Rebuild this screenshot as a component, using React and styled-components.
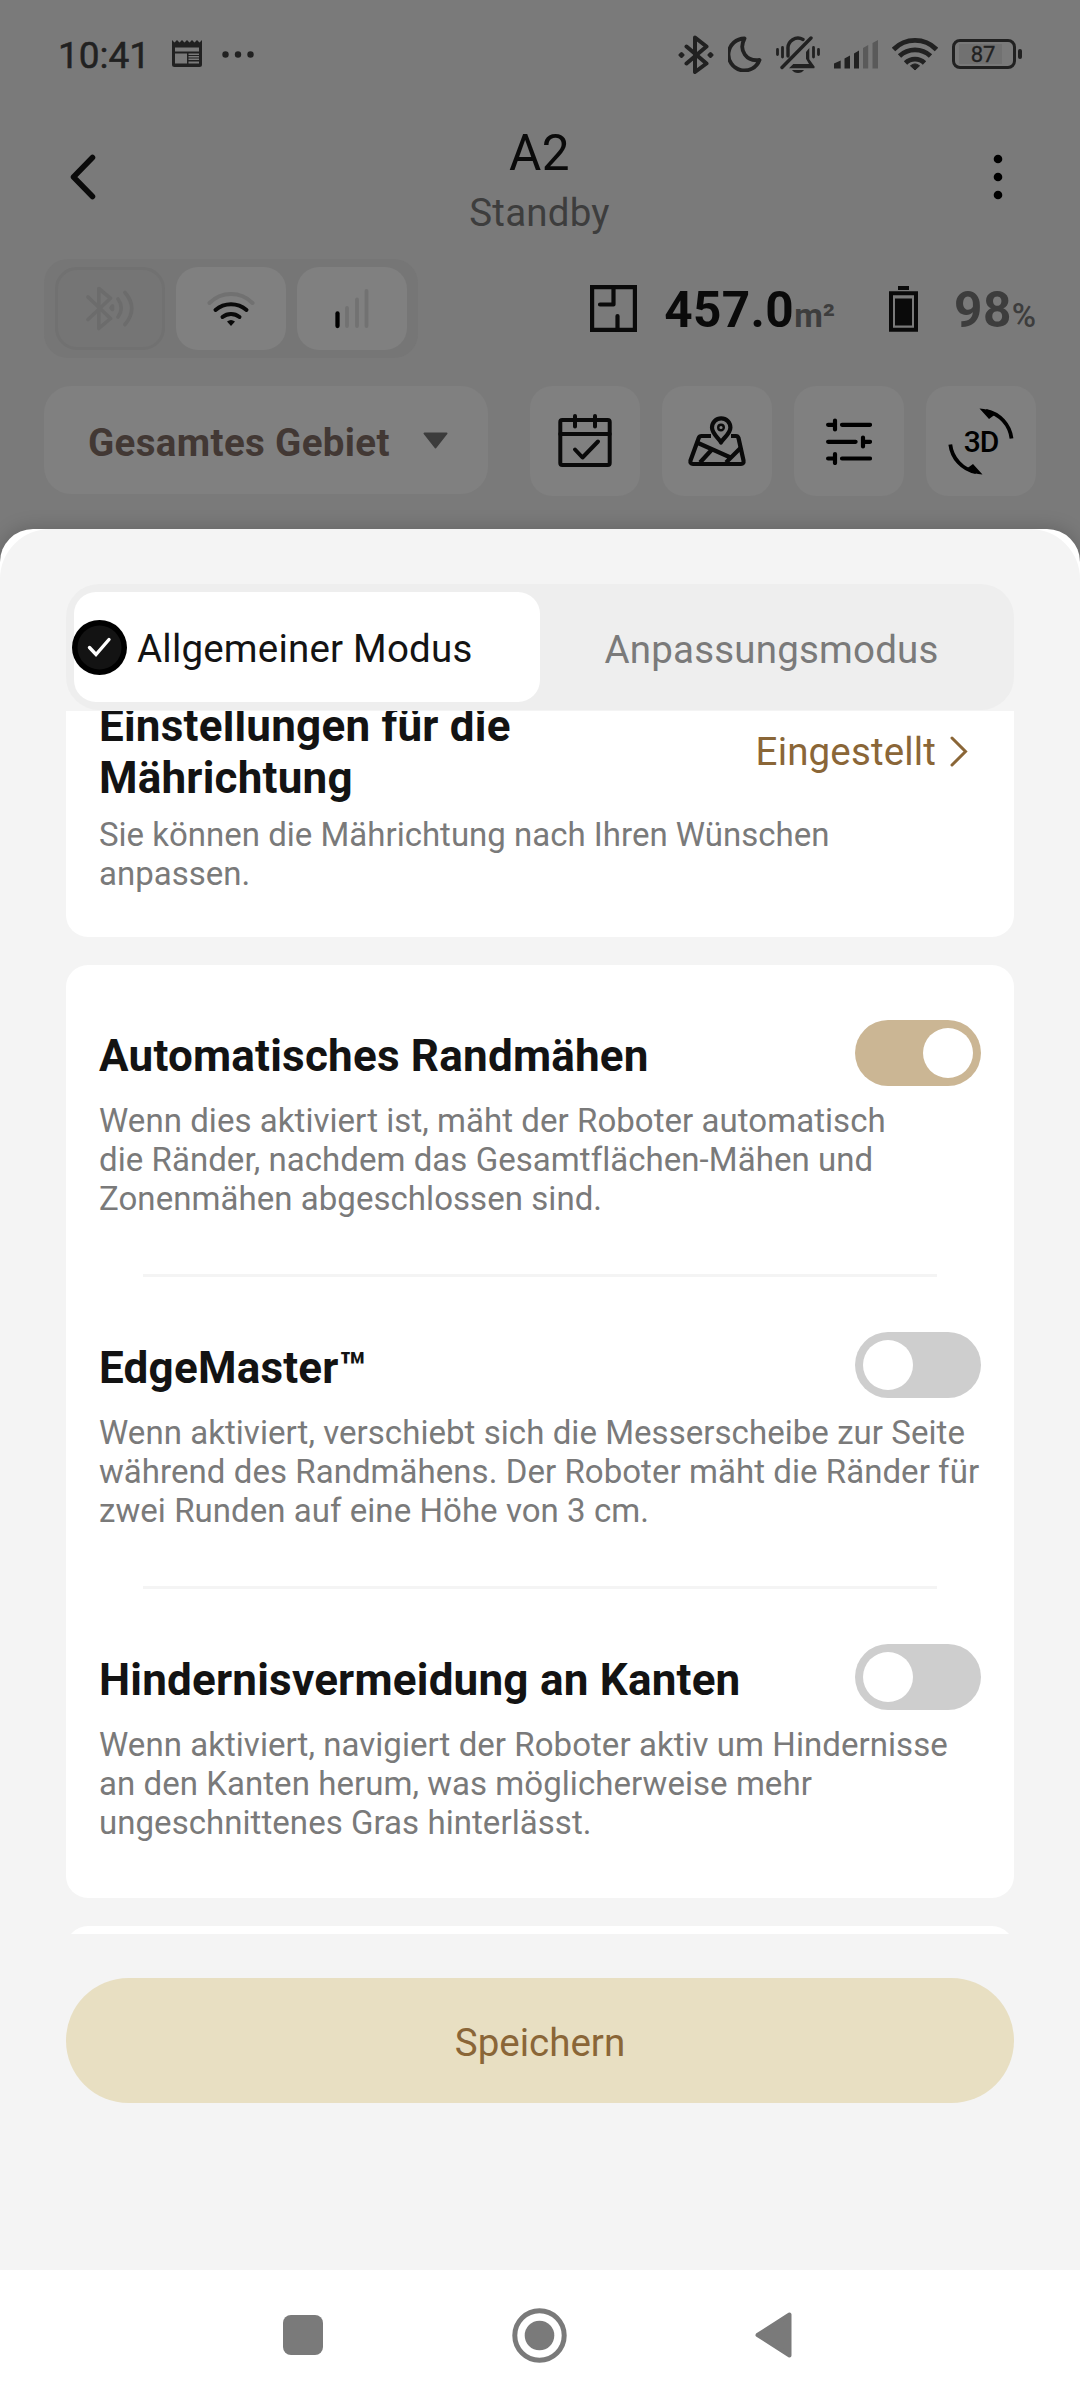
import React, { useState } from "react";
import styled, { createGlobalStyle } from "styled-components";

const settings = [
  {
    id: "edge",
    title: "Automatisches Randmähen",
    text: "Wenn dies aktiviert ist, mäht der Roboter automatisch\ndie Ränder, nachdem das Gesamtflächen-Mähen und\nZonenmähen abgeschlossen sind.",
    on: true,
  },
  {
    id: "edgemaster",
    title: "EdgeMaster™",
    text: "Wenn aktiviert, verschiebt sich die Messerscheibe zur Seite\nwährend des Randmähens. Der Roboter mäht die Ränder für\nzwei Runden auf eine Höhe von 3 cm.",
    on: false,
  },
  {
    id: "obstacle",
    title: "Hindernisvermeidung an Kanten",
    text: "Wenn aktiviert, navigiert der Roboter aktiv um Hindernisse\nan den Kanten herum, was möglicherweise mehr\nungeschnittenes Gras hinterlässt.",
    on: false,
  },
];

export default function App() {
  const [values, setValues] = useState(
    Object.fromEntries(settings.map((s) => [s.id, s.on]))
  );

  function handleToggle(id) {
    setValues({ ...values, [id]: !values[id] });
  }

  return (
    <Screen>
      <GlobalStyle />
      <StatusBar />
      <Header>
        <BackIcon />
        <Heading>
          <DeviceName>A2</DeviceName>
          <DeviceState>Standby</DeviceState>
        </Heading>
        <MoreIcon />
      </Header>
      <InfoRow>
        <Connections>
          <Connection $off>
            <BluetoothWavesIcon />
          </Connection>
          <Connection>
            <WifiIcon />
          </Connection>
          <Connection>
            <BarsIcon />
          </Connection>
        </Connections>
        <Stats>
          <AreaIcon />
          <Value>
            457.0<Unit $bold>m²</Unit>
          </Value>
          <BatteryIcon />
          <Value $muted>
            98<Unit>%</Unit>
          </Value>
        </Stats>
      </InfoRow>
      <Toolbar>
        <AreaSelect>
          Gesamtes Gebiet
          <svg width="25" height="17" viewBox="0 0 25 17">
            <path d="M1.5 1.5h22L12.5 15.5z" fill="#3c3c3c" stroke="#3c3c3c" strokeWidth="2" strokeLinejoin="round" />
          </svg>
        </AreaSelect>
        <Tools>
          <Tool>
            <CalendarIcon />
          </Tool>
          <Tool>
            <MapIcon />
          </Tool>
          <Tool>
            <SlidersIcon />
          </Tool>
          <Tool>
            <ThreeDIcon />
          </Tool>
        </Tools>
      </Toolbar>

      <Sheet>
        <SheetBody>
          <Tabs>
            <Tab $active>
              <CheckIcon />
              <span>Allgemeiner Modus</span>
            </Tab>
            <Tab>Anpassungsmodus</Tab>
          </Tabs>
          <ScrollArea>
            <Card>
              <Direction>
                <DirectionTop>
                  <Title>{"Einstellungen für die\nMährichtung"}</Title>
                  <Link>
                    Eingestellt
                    <svg width="18" height="31" viewBox="0 0 18 31">
                      <path d="M2 2l13.5 13.5L2 29" fill="none" stroke="#8a6637" strokeWidth="3" strokeLinecap="round" />
                    </svg>
                  </Link>
                </DirectionTop>
                <Text>{"Sie können die Mährichtung nach Ihren Wünschen\nanpassen."}</Text>
              </Direction>
            </Card>
            <Card>
              {settings.map((item) => (
                <Setting key={item.id}>
                  <SettingTop>
                    <Title>{item.title}</Title>
                    <Switch
                      $on={values[item.id]}
                      aria-label={item.title}
                      onClick={() => handleToggle(item.id)}
                    >
                      <Knob />
                    </Switch>
                  </SettingTop>
                  <Text>{item.text}</Text>
                </Setting>
              ))}
            </Card>
            <Card $next />
          </ScrollArea>
          <SaveButton>Speichern</SaveButton>
        </SheetBody>
      </Sheet>

      <NavBar>
        <svg width="40" height="40" viewBox="0 0 40 40">
          <rect width="40" height="40" rx="8" fill="#7a7a7a" />
        </svg>
        <svg width="55" height="55" viewBox="0 0 55 55">
          <circle cx="27.5" cy="27.5" r="24.7" fill="none" stroke="#7a7a7a" strokeWidth="5" />
          <circle cx="27.5" cy="27.5" r="14.8" fill="#7a7a7a" />
        </svg>
        <svg width="37" height="46" viewBox="0 0 37 46">
          <path d="M34.5 2.5v41L2.5 23z" fill="#7a7a7a" stroke="#7a7a7a" strokeWidth="4" strokeLinejoin="round" />
        </svg>
      </NavBar>
    </Screen>
  );
}

function StatusBar() {
  return (
    <Status>
      <StatusSide>
        <Time>10:41</Time>
        <svg width="30" height="28" viewBox="0 0 30 28">
          <path d="M0 0l2.5 2.5L5 0l2.5 2.5L10 0l2.5 2.5L15 0l2.5 2.5L20 0l2.5 2.5L25 0l2.5 2.5L30 0v24.5q0 2.5-2.5 2.5h-25Q0 27 0 24.5z" fill="#212121" />
          <path d="M3 7.5h24v4H3zM3 13.5h12v10H3zM16.5 13.5H27V15H16.5zM16.5 16H27v1.500H16.5zM16.5 18.5H27V20H16.5zM16.5 21.5H27v2H16.5z" fill="#7a7a7a" />
        </svg>
        <svg width="32" height="7" viewBox="0 0 32 7" fill="#212121">
          <circle cx="3.5" cy="3.5" r="3.2" />
          <circle cx="16" cy="3.5" r="3.2" />
          <circle cx="28.5" cy="3.5" r="3.2" />
        </svg>
      </StatusSide>
      <StatusIcons>
        <svg width="36" height="39" viewBox="0 0 36 39" fill="none" stroke="#212121" strokeWidth="4" strokeLinejoin="round" strokeLinecap="round">
          <path d="M8.5 11.5L28.5 28.5 17 37V2.500l11.500 9L8.500 28.500" />
          <path d="M3.5 18.5L5 20l-1.500 1.500L2 20zM32.500 18.500L34 20l-1.500 1.500L31 20z" strokeWidth="3" />
        </svg>
        <svg width="34" height="36" viewBox="0 0 34 36">
          <path d="M16.5 2.5A16 16 0 1 0 31.5 24C19 26 10 15 16.500 2.500z" fill="none" stroke="#212121" strokeWidth="3.8" strokeLinejoin="round" />
        </svg>
        <svg width="44" height="37" viewBox="0 0 44 37" fill="none" stroke="#212121" strokeWidth="3.4" strokeLinecap="round" strokeLinejoin="round">
          <path d="M12 20v-7A10 10 0 0 1 27 3.500M6 31.500L35 2" />
          <path d="M30 16l3.300-4v11.300l5.400 7.400-.4 1.600H13l4.300-4.300H33l-3-5.300z" fill="#212121" stroke="none" />
          <path d="M16 34h12q-2 3-6 3t-6-3z" fill="#212121" stroke="none" />
          <path d="M1.5 13.5v5M6.500 11.500v9.500M37.500 11.500v9.500M42.500 13.500v5" strokeWidth="2.8" />
        </svg>
        <svg width="44" height="29" viewBox="0 0 44 29" fill="#212121">
          <path d="M0 23.500L6.700 20.500V28.500H0zM10.500 18.500L16 15.500V28.500h-5.500zM20 13.500l5-3V28.500h-5z" />
          <path d="M29 8l5.200-3V28.500H29zM38.500 3L44 0v28.500h-5.500z" fill="#5a5a5a" />
        </svg>
        <svg width="46" height="34" viewBox="0 0 46 34" fill="none" stroke="#212121" strokeWidth="4.8">
          <path d="M1.5 12.5A30 30 0 0 1 44.5 12.5M7.500 19A22.500 22.500 0 0 1 38.500 19M13.500 26A13.500 13.500 0 0 1 32.500 26" />
          <path d="M18.5 28.8Q23 25 27.500 28.800L23 33z" fill="#212121" strokeWidth="1" />
        </svg>
        <PhoneBattery>
          <Charge>87</Charge>
        </PhoneBattery>
      </StatusIcons>
    </Status>
  );
}

const BackIcon = () => (
  <svg width="28" height="46" viewBox="0 0 28 46">
    <path d="M23.5 3.5L4.5 23l19 19.500" fill="none" stroke="#0a0a0a" strokeWidth="5.5" strokeLinecap="round" strokeLinejoin="round" />
  </svg>
);

const MoreIcon = () => (
  <svg width="10" height="46" viewBox="0 0 10 46" fill="#000">
    <circle cx="5" cy="5" r="4.3" />
    <circle cx="5" cy="23" r="4.3" />
    <circle cx="5" cy="41" r="4.3" />
  </svg>
);

const BluetoothWavesIcon = () => (
  <svg width="48" height="45" viewBox="0 0 48 45" fill="none" stroke="#6c6c6c" strokeWidth="3.6" strokeLinecap="round" strokeLinejoin="round">
    <path d="M2 11L24.500 32.500 12.800 42.500V2.500l11.700 9.800L2 33.500" />
    <path d="M32 13q6.500 9 0 18M39 6.500q13.500 16 0 32" />
    <path d="M26.500 20v3.500L25 21.800z" />
  </svg>
);

const WifiIcon = () => (
  <svg width="48" height="36" viewBox="0 0 48 36" fill="none" stroke="#0a0a0a" strokeWidth="4" strokeLinecap="round">
    <path d="M2.500 12A30 30 0 0 1 45.500 12" stroke="#717171" />
    <path d="M8.500 19A23.500 23.500 0 0 1 39.500 19M15.500 26A13.500 13.500 0 0 1 32.500 26" />
    <path d="M20 30.500Q24 27.500 28 30.500L24 35z" fill="#0a0a0a" stroke="none" />
  </svg>
);

const BarsIcon = () => (
  <svg width="34" height="40" viewBox="0 0 34 40" fill="none" stroke="#727272" strokeWidth="3.8" strokeLinecap="round">
    <path d="M2.500 24.500v12.500" stroke="#000" strokeWidth="4.3" />
    <path d="M12 19v18M22 10.500v26.500M31.500 2v35" />
  </svg>
);

const AreaIcon = () => (
  <svg width="47" height="47" viewBox="0 0 47 47" fill="none" stroke="#0a0a0a" strokeWidth="4.2">
    <path d="M2.100 2.100h42.800v42.800H2.100z" />
    <path d="M23.500 3v16.500H10M27.500 45V31" strokeLinecap="round" strokeLinejoin="round" />
  </svg>
);

const BatteryIcon = () => (
  <svg width="29" height="46" viewBox="0 0 29 46" fill="#0a0a0a">
    <path d="M9 0h11v4H9z" />
    <path d="M2 7.200h25v36.500H2z" fill="none" stroke="#0a0a0a" strokeWidth="4" />
    <path d="M6 12.500h17v27H6z" />
  </svg>
);

const CalendarIcon = () => (
  <svg width="54" height="54" viewBox="0 0 54 54" fill="none" stroke="#0a0a0a" strokeWidth="4" strokeLinecap="round" strokeLinejoin="round">
    <rect x="2.3" y="6" width="49.4" height="45" rx="2" />
    <path d="M2.300 20h49.400M17 2v10.500M37 2v10.500M17 35.500l7.500 8L40 27.500" />
  </svg>
);

const MapIcon = () => (
  <svg width="58" height="51" viewBox="0 0 58 51" fill="none" stroke="#0a0a0a" strokeWidth="4.2" strokeLinejoin="round">
    <path d="M23 20H13.500q-2 0-2.800 2L2.500 44.500Q2 48 5 48h48q3 0 2.500-3.500L50.500 22q-.7-2-2.500-2h-5" />
    <path d="M33 26.500C31 22 24 18 24 11.500a9.200 9.200 0 0 1 18.400 0C42.400 18 35 22 33 26.500z" />
    <circle cx="33" cy="11.5" r="2.8" strokeWidth="2.4" />
    <path d="M10 27l32.500 14.500M23.500 34L12 46.500M53 31.500L38 46.500" />
  </svg>
);

const SlidersIcon = () => (
  <svg width="46" height="47" viewBox="0 0 46 47" fill="none" stroke="#000" strokeWidth="4.2" strokeLinecap="round">
    <path d="M2.100 6.800h7M9 2.500v9M16 6.800h28" />
    <path d="M2.100 23.800h27.500M37 19.500v9M37 23.800h7" />
    <path d="M2.100 40.500h7M9 36v9M16 40.500h28" />
  </svg>
);

const ThreeDIcon = () => (
  <ThreeD>
    <svg width="66" height="67" viewBox="0 0 66 67" fill="none" stroke="#000" strokeWidth="3.8">
      <path d="M38 2.800A32 32 0 0 1 63.500 30.500M28 64.200A32 32 0 0 1 2.300 36.500" />
      <path d="M31.500.5q9 .5 17 5L41 11zM34.500 66.500q-9-.5-17-5L25 56z" fill="#000" stroke="none" />
    </svg>
    <span>3D</span>
  </ThreeD>
);

const CheckIcon = () => (
  <svg width="55" height="55" viewBox="0 0 55 55">
    <circle cx="27.5" cy="27.5" r="27.5" fill="#000" />
    <circle cx="27.5" cy="27.5" r="22" fill="#131313" />
    <path d="M17.500 27.500l6.500 7 13-15" fill="none" stroke="#fff" strokeWidth="3.4" strokeLinecap="round" />
  </svg>
);

const GlobalStyle = createGlobalStyle`
  * {
    box-sizing: border-box;
  }
  body {
    margin: 0;
    font-family: Roboto, sans-serif;
  }
  svg {
    display: block;
    flex-shrink: 0;
  }
  button {
    font: inherit;
    border: 0;
    padding: 0;
  }
`;

const Screen = styled.main`
  display: flex;
  flex-direction: column;
  width: 1080px;
  height: 2400px;
  background-color: #7a7a7a;
  overflow: hidden;
`;

const Status = styled.div`
  display: flex;
  justify-content: space-between;
  align-items: center;
  height: 108px;
  padding: 0 58px 0 58px;
`;

const StatusSide = styled.div`
  display: flex;
  align-items: center;
  gap: 20px;
`;

const Time = styled.span`
  width: 94px;
  padding-top: 2px;
  font-size: 37px;
  font-weight: 400;
  -webkit-text-stroke: 0.5px #212121;
  color: #212121;
  white-space: nowrap;
`;

const StatusIcons = styled.div`
  display: flex;
  align-items: center;
  gap: 14px;
`;

const PhoneBattery = styled.div`
  display: flex;
  position: relative;
  width: 64px;
  height: 30px;
  margin-right: 6px;
  padding: 2px 4px;
  border: 3px solid #212121;
  border-radius: 8px;
  &::after {
    content: "";
    position: absolute;
    right: -9px;
    top: 7px;
    width: 4px;
    height: 10px;
    border-radius: 2px;
    background-color: #212121;
  }
`;

const Charge = styled.span`
  width: 43px;
  height: 20px;
  padding-left: 5px;
  background-color: #717171;
  font-size: 22px;
  line-height: 22px;
  font-weight: 400;
  -webkit-text-stroke: 0.3px #212121;
  text-align: center;
  color: #212121;
`;

const Header = styled.header`
  display: flex;
  justify-content: space-between;
  align-items: center;
  height: 138px;
  padding: 0 77px 0 69px;
`;

const Heading = styled.div`
  display: flex;
  flex-direction: column;
  align-items: center;
  gap: 8px;
  padding: 5px 11px 0 0;
`;

const DeviceName = styled.h1`
  margin: 0;
  font-size: 49.5px;
  line-height: 58px;
  font-weight: 400;
  letter-spacing: 0.5px;
  color: #0a0a0a;
`;

const DeviceState = styled.span`
  font-size: 38.5px;
  line-height: 45px;
  letter-spacing: 0.2px;
  color: #3d3d3d;
`;

const InfoRow = styled.div`
  display: flex;
  justify-content: space-between;
  align-items: center;
  margin-top: 13px;
  padding: 0 44px;
`;

const Connections = styled.div`
  display: flex;
  gap: 11px;
  padding: 8px 11px;
  border-radius: 24px;
  background-color: #767676;
`;

const Connection = styled.div`
  display: flex;
  justify-content: center;
  align-items: center;
  width: 110px;
  height: 83px;
  border-radius: 22px;
  background-color: ${({ $off }) => ($off ? "#757575" : "#808080")};
  ${({ $off }) => $off && "border: 3px solid #717171;"}
`;

const Stats = styled.div`
  display: flex;
  align-items: center;
  & > svg:nth-of-type(2) {
    margin-left: 54px;
    margin-right: 9px;
  }
`;

const Value = styled.span`
  margin-left: 27px;
  padding-top: 9px;
  font-size: 49.5px;
  line-height: 58px;
  font-weight: 700;
  letter-spacing: 0.4px;
  color: ${({ $muted }) => ($muted ? "#3d3d3d" : "#0a0a0a")};
  white-space: nowrap;
`;

const Unit = styled.small`
  font-size: 33px;
  font-weight: ${({ $bold }) => ($bold ? 700 : 500)};
  letter-spacing: 0;
  color: #3d3d3d;
`;

const Toolbar = styled.div`
  display: flex;
  justify-content: space-between;
  height: 110px;
  margin: 28px 44px 33px;
`;

const AreaSelect = styled.button`
  display: flex;
  justify-content: space-between;
  align-items: center;
  width: 444px;
  height: 108px;
  padding: 4px 40px 0 44px;
  border-radius: 27px;
  background-color: #808080;
  font-size: 38.5px;
  font-weight: 700;
  letter-spacing: 0.35px;
  color: #423834;
  & svg {
    margin-top: -4px;
  }
`;

const Tools = styled.div`
  display: flex;
  gap: 22px;
`;

const Tool = styled.button`
  display: flex;
  justify-content: center;
  align-items: center;
  width: 110px;
  height: 110px;
  border-radius: 22px;
  background-color: #808080;
`;

const ThreeD = styled.span`
  display: grid;
  place-items: center;
  & > * {
    grid-area: 1 / 1;
  }
  & span {
    font-size: 30px;
    font-weight: 500;
    letter-spacing: -1px;
    color: #000;
  }
`;

const Sheet = styled.section`
  height: 1741px;
  border-radius: 33px 33px 0 0;
  background-color: white;
  box-shadow: 0 0 20px rgba(0, 0, 0, 0.2);
`;

const SheetBody = styled.div`
  display: flex;
  flex-direction: column;
  height: 100%;
  padding: 55px 66px 0;
  border-radius: 50px 50px 0 0;
  background-color: #f4f4f4;
`;

const Tabs = styled.div`
  display: flex;
  height: 126px;
  padding: 8px;
  border-radius: 33px;
  background-color: #eee;
`;

const Tab = styled.button`
  display: flex;
  align-items: center;
  justify-content: center;
  gap: 10px;
  width: 466px;
  height: 110px;
  border-radius: 22px;
  padding: 4px 3px 0 0;
  background-color: transparent;
  font-size: 38.5px;
  letter-spacing: 0.2px;
  color: #7a7a7a;
  ${({ $active }) =>
    $active &&
    `
  justify-content: flex-start;
  padding-top: 0;
  background-color: white;
  color: #131313;
  & svg {
    margin-left: -2px;
  }
  & span {
    padding-top: 2px;
  }
  `}
`;

const ScrollArea = styled.div`
  display: flex;
  flex-direction: column;
  gap: 28px;
  height: 1223px;
  margin-top: 1px;
  overflow: hidden;
`;

const Card = styled.div`
  flex-shrink: 0;
  border-radius: 22px;
  background-color: white;
  ${({ $next }) => $next && "height: 200px;"}
  /* the first card is scrolled partly under the tabs */
  &:first-child {
    margin-top: -66px;
  }
`;

const Direction = styled.div`
  height: 292px;
  padding: 55px 33px 0;
`;

const DirectionTop = styled.div`
  display: flex;
  justify-content: space-between;
  align-items: center;
`;

const Title = styled.h2`
  margin: 0;
  font-size: 44px;
  line-height: 52px;
  font-weight: 700;
  letter-spacing: 0.22px;
  color: #131313;
  white-space: pre-line;
`;

const Link = styled.span`
  display: flex;
  align-items: center;
  gap: 14px;
  padding: 0 13px 2px 0;
  font-size: 38.5px;
  letter-spacing: 0.15px;
  color: #8a6637;
`;

const Text = styled.p`
  margin: 11px 0 0;
  font-size: 33px;
  line-height: 39px;
  color: #7a7a7a;
  white-space: pre;
`;

const Setting = styled.div`
  height: 309px;
  padding: 55px 33px 0;
  & + & {
    height: 312px;
    padding-top: 58px;
    background: linear-gradient(#f4f4f4, #f4f4f4) 77px 0 / 794px 3px no-repeat;
  }
  & ${Text} {
    margin-top: 15px;
    letter-spacing: 0.05px;
  }
`;

const SettingTop = styled.div`
  display: flex;
  justify-content: space-between;
  height: 66px;
  & ${Title} {
    padding-top: 10px;
  }
`;

const Switch = styled.button`
  display: flex;
  justify-content: ${({ $on }) => ($on ? "flex-end" : "flex-start")};
  align-items: center;
  width: 126px;
  height: 66px;
  padding: 0 8px;
  border-radius: 33px;
  background-color: ${({ $on }) => ($on ? "#cbb694" : "#cecece")};
`;

const Knob = styled.span`
  width: 50px;
  height: 50px;
  border-radius: 50%;
  background-color: white;
`;

const SaveButton = styled.button`
  height: 125px;
  margin-top: 44px;
  padding-top: 4px;
  border-radius: 63px;
  background-color: #e8dfc2;
  font-size: 38.5px;
  color: #8a6637;
`;

const NavBar = styled.nav`
  display: flex;
  justify-content: space-between;
  align-items: center;
  height: 130px;
  padding: 0 288px 0 283px;
  background-color: white;
`;
